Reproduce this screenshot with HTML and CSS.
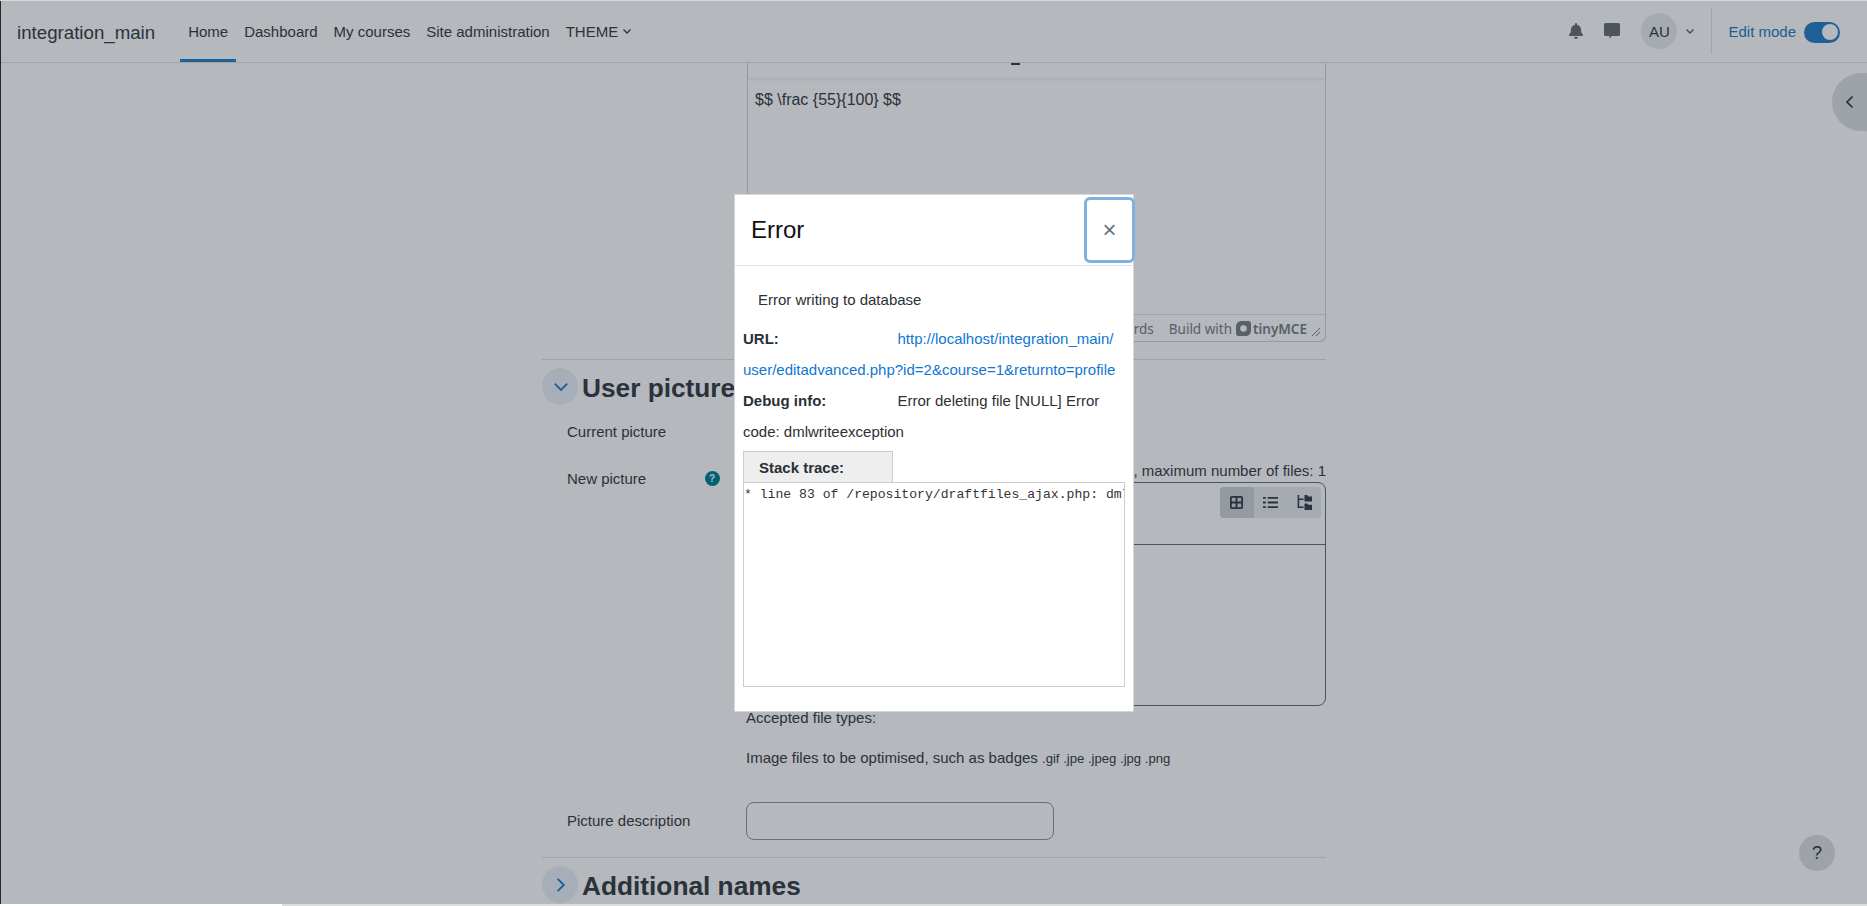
FILE: index.html
```html
<!DOCTYPE html>
<html lang="en">
<head>
<meta charset="utf-8">
<title>Error</title>
<link rel="stylesheet" href="styles.css">
</head>
<body>
<div class="page">
  <header class="navbar">
    <a class="brand">integration_main</a>
    <nav class="primary">
      <a class="nav-item active">Home</a>
      <a class="nav-item">Dashboard</a>
      <a class="nav-item">My courses</a>
      <a class="nav-item">Site administration</a>
      <a class="nav-item">THEME <svg class="caret" viewBox="0 0 10 10"><path d="M1.5 3.5 5 7l3.5-3.5" fill="none" stroke="currentColor" stroke-width="1.3"/></svg></a>
    </nav>
    <div class="nav-right">
      <svg class="ico bell" viewBox="0 0 448 512"><path fill="currentColor" d="M224 512c35 0 64-29 64-64H160c0 35 29 64 64 64zm215-150c-19-21-55-52-55-154 0-78-54-140-128-155V32a32 32 0 1 0-64 0v21C118 68 64 130 64 208c0 102-36 133-55 154-6 6-9 14-9 22 0 16 13 32 32 32h384c19 0 32-16 32-32 0-8-3-16-9-22z"/></svg>
      <svg class="ico chat" viewBox="0 0 16 16"><path fill="currentColor" d="M1.500 0h13A1.500 1.500 0 0 1 16 1.500v10a1.500 1.500 0 0 1-1.500 1.500H8l-2.500 2.500V13h-4A1.500 1.500 0 0 1 0 11.500v-10A1.500 1.500 0 0 1 1.500 0z"/></svg>
      <span class="avatar">AU</span>
      <svg class="caret user-caret" viewBox="0 0 10 10"><path d="M1.5 3.5 5 7l3.5-3.5" fill="none" stroke="currentColor" stroke-width="1.3"/></svg>
      <span class="divider"></span>
      <span class="edit-label">Edit mode</span>
      <span class="toggle"><span class="knob"></span></span>
    </div>
  </header>

  <main class="content">
    <section class="editor">
      <div class="editor-top"><span class="dash"></span></div>
      <div class="editor-body">$$ \frac {55}{100} $$</div>
      <div class="editor-status">
        <span class="words">words</span>
        <span class="build">Build with</span>
        <svg class="tiny-logo" viewBox="0 0 16 16"><path fill="currentColor" fill-rule="evenodd" d="M5.500 0H13a3 3 0 0 1 3 3v7.500a5.500 5.500 0 0 1-5.500 5.500H3a3 3 0 0 1-3-3V5.500A5.500 5.500 0 0 1 5.500 0zM8 4.500a3.500 3.500 0 1 0 0 7 3.500 3.500 0 0 0 0-7z"/></svg>
        <span class="tiny">tinyMCE</span>
        <svg class="grip" viewBox="0 0 10 10"><path d="M9 1 1 9M9 5 5 9" fill="none" stroke="currentColor"/></svg>
      </div>
    </section>

    <hr class="rule first-rule">
    <div class="section-head">
      <span class="round-btn"><svg viewBox="0 0 16 16"><path d="M2.500 5 8 10.500 13.500 5" fill="none" stroke="currentColor" stroke-width="1.700"/></svg></span>
      <h3>User picture</h3>
    </div>

    <div class="row current"><span class="label">Current picture</span></div>
    <div class="row newpic">
      <span class="label">New picture<span class="help">?</span></span>
      <div class="field">
        <div class="limits">, maximum number of files: 1</div>
        <div class="filepicker">
          <div class="fp-tools">
            <span class="fp-btn on"><svg viewBox="0 0 16 16"><path fill="none" stroke="currentColor" stroke-width="1.900" d="M2 3a1 1 0 0 1 1-1h10a1 1 0 0 1 1 1v10a1 1 0 0 1-1 1H3a1 1 0 0 1-1-1zM8 2v12M2 8h12"/></svg></span>
            <span class="fp-btn"><svg viewBox="0 0 16 16"><path fill="none" stroke="currentColor" stroke-width="1.900" d="M5 3h11M5 8h11M5 13h11M0 3h3M0 8h3M0 13h3"/></svg></span>
            <span class="fp-btn"><svg viewBox="0 0 16 16"><path fill="none" stroke="currentColor" stroke-width="1.700" d="M1.500 0v13H7M1.500 4.500H7"/><path fill="currentColor" d="M8 0h3l1 1.500h4V7H8zM8 9h3l1 1.500h4V16H8z"/></svg></span>
          </div>
        </div>
        <p class="accepted">Accepted file types:</p>
        <p class="types">Image files to be optimised, such as badges <small>.gif .jpe .jpeg .jpg .png</small></p>
      </div>
    </div>
    <div class="row desc">
      <span class="label">Picture description</span>
      <span class="text-input"></span>
    </div>
    <hr class="rule">
    <div class="section-head">
      <span class="round-btn"><svg viewBox="0 0 16 16"><path d="M5 2.500 10.500 8 5 13.500" fill="none" stroke="currentColor" stroke-width="1.700"/></svg></span>
      <h3>Additional names</h3>
    </div>
  </main>
</div>

<div class="backdrop"></div>
<span class="drawer-toggle"><svg viewBox="0 0 16 16"><path d="M10.500 2.500 5 8l5.500 5.500" fill="none" stroke="currentColor" stroke-width="1.700"/></svg></span>
<span class="help-float">?</span>

<div class="modal" role="dialog">
  <div class="modal-head">
    <h5>Error</h5>
    <button class="close">&times;</button>
  </div>
  <div class="modal-body">
    <p class="msg">Error writing to database</p>
    <p class="info"><b>URL:</b><a>http://localhost/integration_main/ user/editadvanced.php?id=2&amp;course=1&amp;returnto=profile</a></p>
    <p class="info"><b>Debug info:</b><span>Error deleting file [NULL] Error code: dmlwriteexception</span></p>
    <div class="tab">Stack trace:</div>
    <pre class="trace">* line 83 of /repository/draftfiles_ajax.php: dml_write_exception thrown</pre>
  </div>
</div>
<div class="edge-top"></div>
<div class="edge-left"></div>
<div class="edge-bottom"><span class="edge-white"></span></div>
</body>
</html>
```

FILE: styles.css
```css
* { box-sizing: border-box; }
html, body { margin: 0; height: 906px; overflow: hidden; }
body { font-family: "Liberation Sans", Arial, sans-serif; font-size: 15px; color: #3a4047; background: #fff; position: relative; }
.page { height: 906px; overflow: hidden; }
.navbar { height: 63px; display: flex; align-items: center; border-bottom: 1px solid #dee2e6; padding: 0 0 0 17px; }
.brand { font-size: 18.700px; margin: 3px 25px 0 0; }
.primary { display: flex; height: 62px; }
.nav-item { display: flex; align-items: center; padding: 0 8px; font-size: 15px; position: relative; height: 62px; white-space: pre; }
.nav-item.active::after { content: ""; position: absolute; left: 0; right: 0; bottom: 0; height: 3px; background: #2a80c8; }
.caret { width: 10px; height: 10px; margin-left: 0; }
.nav-right { margin-left: auto; display: flex; align-items: center; padding-right: 27px; color: #495057; }
.ico { width: 16px; height: 16px; color: #6a7075; }
.bell { margin-right: 20px; }
.chat { margin-right: 21px; }
.avatar { width: 36px; height: 36px; border-radius: 50%; background: #e9ecef; display: flex; align-items: center; justify-content: center; font-size: 15px; color: #3a4047; }
.user-caret { margin-left: 8px; margin-right: 16px; color: #5a6066; }
.divider { width: 1px; height: 46px; background: #dee2e6; margin-right: 16px; }
.edit-label { color: #2a80c8; font-size: 15px; margin-right: 8px; }
.toggle { width: 36px; height: 21px; margin-top: 2px; border-radius: 11px; background: #2a80c8; display: flex; justify-content: flex-end; align-items: center; padding: 2px; }
.knob { width: 16px; height: 16px; border-radius: 50%; background: #fff; }

.content { width: 784px; margin-left: 542px; }
.editor { margin-left: 205px; width: 579px; height: 279px; border: 1px solid #ced4da; border-top: 0; border-radius: 0 0 6px 6px; display: flex; flex-direction: column; }
.editor-top { height: 15px; flex: none; position: relative; box-shadow: 0 2px 3px -1px rgba(40,50,60,.12); }
.dash { position: absolute; left: 263px; top: 0; width: 9px; height: 2px; background: #3a4047; }
.editor-body { flex: 1; padding: 13px 7px 0; font-size: 16px; }
.editor-status { height: 27px; padding: 1px 4px 0 0; border-top: 1px solid #dee2e6; display: flex; align-items: center; justify-content: flex-end; font-family: "Noto Sans", sans-serif; font-size: 13.500px; color: #7a8188; }
.words { margin-right: 15px; }
.build { margin-right: 4px; }
.tiny-logo { width: 15px; height: 15px; margin-right: 2px; }
.tiny { font-weight: 600; font-size: 13.500px; margin-right: 4px; }
.grip { width: 10px; height: 10px; margin-top: 6px; }

.rule { border: 0; border-top: 1px solid #dee2e6; margin: 0; }
.first-rule { margin-top: 17px; }
.section-head { display: flex; align-items: center; height: 37px; margin-top: 8px; }
.section-head h3 { margin: 0 0 0 4px; padding-top: 3px; font-size: 26.250px; font-weight: 700; line-height: 1; }
.round-btn { width: 36px; height: 37px; border-radius: 50%; background: #eaf3fb; display: flex; align-items: center; justify-content: center; color: #2a80c8; flex: none; }
.round-btn svg { width: 18px; height: 18px; margin-left: 2px; }
.row { display: flex; padding-left: 25px; }
.label { font-size: 15px; width: 179px; flex: none; position: relative; }
.current { margin-top: 18px; height: 47px; }
.help { position: absolute; left: 137.500px; top: 1px; width: 15px; height: 15px; border-radius: 50%; background: #008196; color: #fff; font-size: 10px; font-weight: 700; display: flex; align-items: center; justify-content: center; }
.field { width: 580px; flex: none; margin-top: -9px; }
.limits { text-align: right; font-size: 15px; line-height: 20px; }
.filepicker { height: 224px; border: 1px solid #69727a; border-radius: 8px; margin-top: 1px; position: relative; }
.fp-tools { position: absolute; right: 4px; top: 4px; display: flex; background: #e9ecef; border-radius: 4px; height: 31px; color: #3a4047; }
.fp-btn { width: 33.670px; display: flex; align-items: center; justify-content: center; border-radius: 4px 0 0 4px; }
.fp-btn.on { background: #ced4da; }
.fp-btn svg { width: 15px; height: 15px; }
.filepicker::after { content: ""; position: absolute; left: 0; right: 0; top: 61px; border-top: 1px solid #69727a; }
.accepted { margin: 2px 0 0; font-size: 15px; line-height: 20px; }
.types { margin: 20px 0 0; font-size: 15px; line-height: 20px; }
.types small { font-size: 13.125px; }
.desc { margin-top: 33px; align-items: center; }
.desc .label { padding-bottom: 2px; }
.text-input { width: 308px; height: 38px; border: 1px solid #8f959e; border-radius: 8px; }
.desc + .rule { margin-top: 17px; }

.backdrop { position: absolute; inset: 0; background: #0b1520; opacity: .3; }
.drawer-toggle { position: absolute; right: -1px; top: 73px; width: 36px; height: 58px; border-radius: 29px 0 0 29px; background: #9ea3a9; color: #2a2e33; display: flex; align-items: center; justify-content: center; }
.drawer-toggle svg { width: 16px; height: 16px; }
.help-float { position: absolute; left: 1799px; top: 835px; width: 36px; height: 36px; border-radius: 50%; background: #9ea3a9; color: #2a2e33; font-size: 18px; display: flex; align-items: center; justify-content: center; }

.modal { position: absolute; left: 734px; top: 194px; width: 400px; height: 518px; background: #fff; border: 1px solid #d4d6d8; color: #2b3035; }
.modal-head { height: 71px; border-bottom: 1px solid #dee2e6; display: flex; align-items: center; justify-content: space-between; padding-left: 16px; }
.modal-head h5 { margin: 0; font-size: 24px; font-weight: 400; color: #111; }
.close { width: 51px; height: 66px; margin-right: -2px; background: #fff; border: 3px solid #7fb0e0; border-radius: 6px; color: #6c757d; font-size: 24px; font-family: inherit; padding: 0; line-height: 1; }
.modal-body { padding: 22px 8px 0; font-size: 15px; }
.msg { margin: 0 0 11px 15px; line-height: 24px; }
.info { margin: 0; line-height: 31px; width: 384px; }
.info b { display: inline-block; width: 154.500px; font-weight: 700; }
.info a { color: #1177d1; }
.tab { width: 150px; height: 31px; background: #eee; border: 1px solid #ccc; border-bottom: 0; margin-top: 4px; font-weight: 700; padding: 6px 15px 0; line-height: 20px; }
.trace { margin: 0; width: 382px; height: 205px; border: 1px solid #ccc; font-family: "Liberation Mono", monospace; font-size: 13.125px; line-height: 15px; padding: 4px 0 0; overflow: hidden; white-space: pre; color: #333; }

.edge-top { position: absolute; left: 0; right: 0; top: 0; height: 1px; background: #d8d9da; }
.edge-left { position: absolute; left: 0; top: 1px; bottom: 2px; width: 1px; background: #24282b; }
.edge-bottom { position: absolute; left: 0; right: 0; bottom: 0; height: 2px; background: #dcdddd; }
.edge-white { display: block; width: 282px; height: 2px; background: #fff; }
```
